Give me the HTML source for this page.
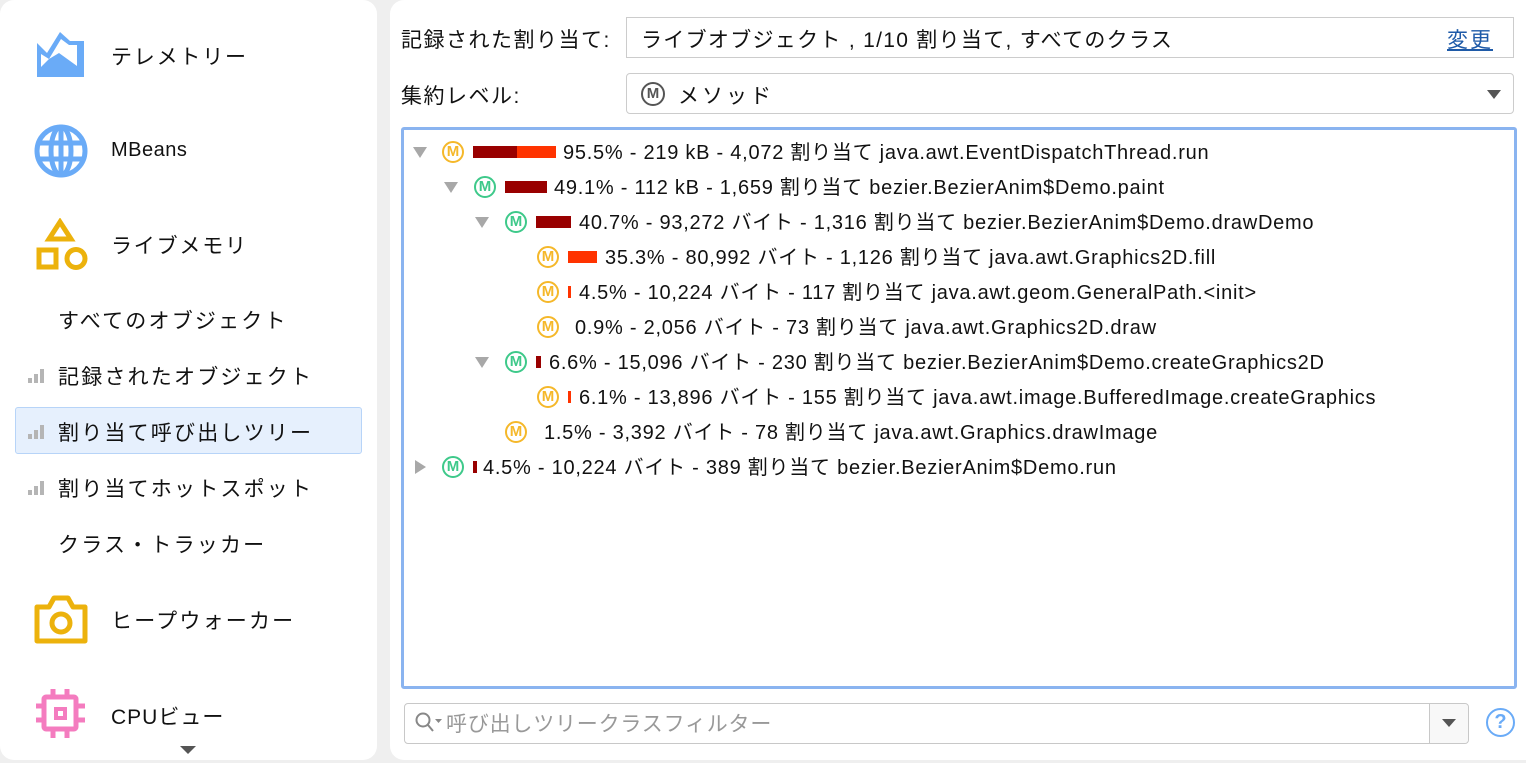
<!DOCTYPE html>
<html><head><meta charset="utf-8"><style>
*{box-sizing:border-box;margin:0;padding:0}
body{width:1526px;height:763px;background:#efefef;position:relative;overflow:hidden;font-family:"Liberation Sans","Noto Sans CJK JP",sans-serif;color:#111}
.p{position:absolute;background:#fff;border-radius:14px}
.a{position:absolute;white-space:nowrap}
.nav{font-size:21px;left:111px;letter-spacing:1.8px}
.sub{font-size:21px;left:58px;letter-spacing:2.2px}
.bars{position:absolute;left:28px;width:18px;height:14px}
.bars i{position:absolute;bottom:0;width:4px;background:#b5b5b5}
.t{font-size:20px;line-height:22px;letter-spacing:0.75px}
.m{position:absolute;width:22px;height:22px;border-radius:50%;border:2px solid;font-size:15px;font-weight:bold;text-align:center;line-height:18px}
.o{border-color:#f5b82a;color:#f5b82a}.g{border-color:#3ec98a;color:#3ec98a}
.tri{position:absolute;width:0;height:0;border-left:7px solid transparent;border-right:7px solid transparent;border-top:11px solid #a8a8a8}
.bar{position:absolute;height:12px}
.d{background:#990000}.r{background:#ff3300}
.f{font-size:21px;letter-spacing:1.5px}
</style></head><body>
<div class="p" style="left:0;top:0;width:377px;height:760px"></div>
<div class="p" style="left:390px;top:0;width:1150px;height:760px"></div>

<svg class="a" style="left:37px;top:31px" width="48" height="46" viewBox="0 0 48 46"><path d="M0 12 L10 22 L23 1 L33 10 L47 10 L47 46 L0 46 Z" fill="#6aabf7"/><path d="M4 23 L4 36 L12 28 L22 22 L40 35 L40 14 L32 14 L24 8 L12 28 Z" fill="#fff"/><path d="M4 40 L12 32 L22 26 L40 40 L40 38 L22 24 L12 30 L4 38Z" fill="#6aabf7"/></svg>
<div class="a nav" style="top:41px">テレメトリー</div>
<svg class="a" style="left:34px;top:124px" width="54" height="54" viewBox="0 0 54 54" fill="none" stroke="#6aabf7" stroke-width="5"><circle cx="27" cy="27" r="24"/><ellipse cx="27" cy="27" rx="10" ry="24"/><line x1="3" y1="19" x2="51" y2="19"/><line x1="3" y1="35" x2="51" y2="35"/><line x1="27" y1="3" x2="27" y2="51"/></svg>
<div class="a nav" style="top:139px;font-size:20px;letter-spacing:0.5px">MBeans</div>
<svg class="a" style="left:36px;top:218px" width="52" height="54" viewBox="0 0 52 54" fill="none" stroke="#ecb20c" stroke-width="5"><path d="M24 4 L35 21 L13 21 Z"/><rect x="3" y="32" width="17" height="17"/><circle cx="40" cy="40.5" r="9"/></svg>
<div class="a nav" style="top:230px">ライブメモリ</div>
<div class="a sub" style="top:305px">すべてのオブジェクト</div>
<div class="bars" style="top:369px"><i style="left:0;height:5px"></i><i style="left:6px;height:9px"></i><i style="left:12px;height:14px"></i></div>
<div class="a sub" style="top:361px">記録されたオブジェクト</div>
<div class="a" style="left:15px;top:407px;width:347px;height:47px;background:#e6f0fd;border:1.5px solid #b7d4f8;border-radius:3px"></div>
<div class="bars" style="top:425px"><i style="left:0;height:5px"></i><i style="left:6px;height:9px"></i><i style="left:12px;height:14px"></i></div>
<div class="a sub" style="top:417px">割り当て呼び出しツリー</div>
<div class="bars" style="top:481px"><i style="left:0;height:5px"></i><i style="left:6px;height:9px"></i><i style="left:12px;height:14px"></i></div>
<div class="a sub" style="top:473px">割り当てホットスポット</div>
<div class="a sub" style="top:529px">クラス・トラッカー</div>
<svg class="a" style="left:34px;top:594px" width="54" height="50" viewBox="0 0 54 50" fill="none" stroke="#ecb20c" stroke-width="5"><path d="M3 13 L15 13 L20 4 L34 4 L39 13 L51 13 L51 47 L3 47 Z" stroke-linejoin="round"/><circle cx="27" cy="29" r="9"/></svg>
<div class="a nav" style="top:605px;letter-spacing:2.2px">ヒープウォーカー</div>
<svg class="a" style="left:36px;top:689px" width="50" height="50" viewBox="0 0 50 50" fill="none" stroke="#f47cbf" stroke-width="5"><rect x="8" y="8" width="32" height="32" rx="2"/><rect x="20" y="20" width="9" height="9" stroke-width="4"/><path d="M17 0v8M31 0v8M17 40v9M31 40v9M0 17h8M0 31h8M40 17h9M40 31h9"/></svg>
<div class="a nav" style="top:701px;letter-spacing:1px">CPUビュー</div>
<div class="tri" style="left:180px;top:746px;border-top-color:#555;border-left-width:8px;border-right-width:8px;border-top-width:8px"></div>

<div class="a f" style="left:401px;top:24px">記録された割り当て:</div>
<div class="a" style="left:626px;top:17px;width:888px;height:41px;border:1.5px solid #ccc"></div>
<div class="a f" style="left:641px;top:24px;letter-spacing:1.3px">ライブオブジェクト , 1/10 割り当て, すべてのクラス</div>
<div class="a" style="left:1447px;top:24px;font-size:21px;letter-spacing:2px;color:#1e5aa8;text-decoration:underline">変更</div>
<div class="a f" style="left:401px;top:80px">集約レベル:</div>
<div class="a" style="left:626px;top:73px;width:888px;height:41px;border:1.5px solid #ccc;border-radius:4px"></div>
<div class="m" style="left:641px;top:82px;width:24px;height:24px;border-color:#555;color:#555;line-height:20px">M</div>
<div class="a f" style="left:678px;top:80px;letter-spacing:3px">メソッド</div>
<div class="tri" style="left:1487px;top:90px;border-top-color:#555;border-top-width:9px;border-left-width:7px;border-right-width:7px"></div>

<div class="a" style="left:401px;top:127px;width:1116px;height:562px;border:3px solid #8ab4f0;border-radius:3px"></div>
<div class="tri" style="left:413px;top:147px"></div>
<div class="m o" style="left:442px;top:141px">M</div>
<div class="bar d" style="left:473px;top:146px;width:44px"></div><div class="bar r" style="left:517px;top:146px;width:39px"></div>
<div class="a t" style="left:563px;top:142px">95.5% - 219 kB - 4,072 割り当て java.awt.EventDispatchThread.run</div>

<div class="tri" style="left:444px;top:182px"></div>
<div class="m g" style="left:474px;top:176px">M</div>
<div class="bar d" style="left:505px;top:181px;width:42px"></div>
<div class="a t" style="left:554px;top:177px">49.1% - 112 kB - 1,659 割り当て bezier.BezierAnim$Demo.paint</div>

<div class="tri" style="left:475px;top:217px"></div>
<div class="m g" style="left:505px;top:211px">M</div>
<div class="bar d" style="left:536px;top:216px;width:35px"></div>
<div class="a t" style="left:579px;top:212px">40.7% - 93,272 バイト - 1,316 割り当て bezier.BezierAnim$Demo.drawDemo</div>

<div class="m o" style="left:537px;top:246px">M</div>
<div class="bar r" style="left:568px;top:251px;width:29px"></div>
<div class="a t" style="left:605px;top:247px">35.3% - 80,992 バイト - 1,126 割り当て java.awt.Graphics2D.fill</div>

<div class="m o" style="left:537px;top:281px">M</div>
<div class="bar r" style="left:568px;top:286px;width:3px"></div>
<div class="a t" style="left:579px;top:282px">4.5% - 10,224 バイト - 117 割り当て java.awt.geom.GeneralPath.&lt;init&gt;</div>

<div class="m o" style="left:537px;top:316px">M</div>
<div class="a t" style="left:575px;top:317px">0.9% - 2,056 バイト - 73 割り当て java.awt.Graphics2D.draw</div>

<div class="tri" style="left:475px;top:357px"></div>
<div class="m g" style="left:505px;top:351px">M</div>
<div class="bar d" style="left:536px;top:356px;width:5px"></div>
<div class="a t" style="left:549px;top:352px">6.6% - 15,096 バイト - 230 割り当て bezier.BezierAnim$Demo.createGraphics2D</div>

<div class="m o" style="left:537px;top:386px">M</div>
<div class="bar r" style="left:568px;top:391px;width:3px"></div>
<div class="a t" style="left:579px;top:387px">6.1% - 13,896 バイト - 155 割り当て java.awt.image.BufferedImage.createGraphics</div>

<div class="m o" style="left:505px;top:421px">M</div>
<div class="a t" style="left:544px;top:422px">1.5% - 3,392 バイト - 78 割り当て java.awt.Graphics.drawImage</div>

<div class="a" style="left:415px;top:460px;width:0;height:0;border-top:7px solid transparent;border-bottom:7px solid transparent;border-left:11px solid #a8a8a8"></div>
<div class="m g" style="left:442px;top:456px">M</div>
<div class="bar d" style="left:473px;top:461px;width:4px"></div>
<div class="a t" style="left:483px;top:457px">4.5% - 10,224 バイト - 389 割り当て bezier.BezierAnim$Demo.run</div>

<div class="a" style="left:404px;top:703px;width:1065px;height:41px;border:1.5px solid #c8c8c8;border-radius:4px"></div>
<div class="a" style="left:1429px;top:704px;width:39px;height:39px;border-left:1.5px solid #c8c8c8;background:#f8f8f8;border-radius:0 4px 4px 0"></div>
<div class="tri" style="left:1442px;top:719px;border-top-color:#555;border-top-width:8px;border-left-width:7px;border-right-width:7px"></div>
<svg class="a" style="left:414px;top:711px" width="30" height="24" viewBox="0 0 30 24" fill="none" stroke="#888" stroke-width="2"><circle cx="9" cy="9" r="6.5"/><path d="M14 14l5 6"/><path d="M21 8h7l-3.5 4z" fill="#888" stroke="none"/></svg>
<div class="a" style="left:446px;top:708px;font-size:21px;letter-spacing:0.8px;color:#999">呼び出しツリークラスフィルター</div>
<div class="a" style="left:1486px;top:708px;width:29px;height:29px;border:2.5px solid #6aabf7;border-radius:50%;color:#6aabf7;font-size:20px;text-align:center;line-height:24px;font-weight:bold">?</div>
</body></html>
